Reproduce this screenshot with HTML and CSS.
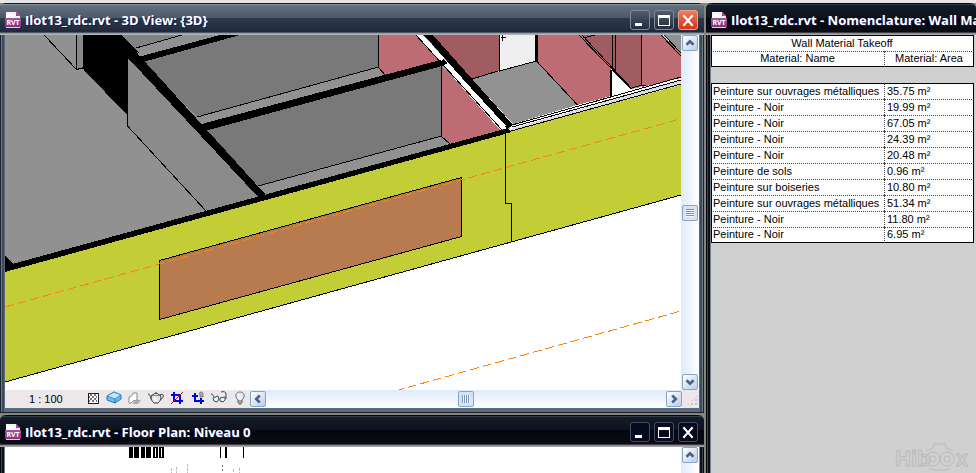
FILE: index.html
```html
<!DOCTYPE html>
<html lang="fr">
<head>
<meta charset="utf-8">
<title>Ilot13_rdc.rvt</title>
<link rel="stylesheet" href="styles.css">
</head>
<body>
<svg class="defs" aria-hidden="true">
  <defs>
    <linearGradient id="plum" x1="0" y1="0" x2="0" y2="1">
      <stop offset="0" stop-color="#a8529c"/><stop offset="1" stop-color="#8a3181"/>
    </linearGradient>
    <symbol id="rvt" viewBox="0 0 16 16">
      <path d="M1 0h10l4 4v12H1z" fill="#f7f1f6"/>
      <path d="M11 0l4 4h-4z" fill="#a33d97"/>
      <path d="M1 4l3-2 3 2 3-1v4H1z" fill="#fff"/>
      <path d="M0 6h16v9H0z" fill="url(#plum)"/>
      <path d="M1 15h14v1H1z" fill="#e5c9e1"/>
      <text x="8" y="13" text-anchor="middle" class="rvt-text">RVT</text>
    </symbol>
    <symbol id="min" viewBox="0 0 18 18"><path d="M4 12h7v3H4z" fill="#fff"/></symbol>
    <symbol id="max" viewBox="0 0 18 18"><path d="M3 4h12v11H3zM4 7v7h10V7z" fill="#fff" fill-rule="evenodd"/></symbol>
    <symbol id="close" viewBox="0 0 18 18"><path d="M5 5l8 9M13 5l-8 9" stroke="#fff" stroke-width="2" stroke-linecap="square"/></symbol>
    <symbol id="up" viewBox="0 0 16 16"><path d="M4 10l4-4 4 4" fill="none" stroke="#4d6185" stroke-width="3"/></symbol>
    <symbol id="down" viewBox="0 0 16 16"><path d="M4 6l4 4 4-4" fill="none" stroke="#4d6185" stroke-width="3"/></symbol>
    <symbol id="left" viewBox="0 0 16 16"><path d="M10 4L6 8l4 4" fill="none" stroke="#4d6185" stroke-width="3"/></symbol>
    <symbol id="right" viewBox="0 0 16 16"><path d="M6 4l4 4-4 4" fill="none" stroke="#4d6185" stroke-width="3"/></symbol>
  </defs>
</svg>

<main class="desktop">
  <div class="stack">
    <section class="window active">
      <header class="titlebar">
        <svg class="doc"><use href="#rvt"/></svg>
        <h1>Ilot13_rdc.rvt - 3D View: {3D}</h1>
        <button type="button" class="wb" aria-label="Minimize"><svg><use href="#min"/></svg></button>
        <button type="button" class="wb" aria-label="Maximize"><svg><use href="#max"/></svg></button>
        <button type="button" class="wb wb-close" aria-label="Close"><svg><use href="#close"/></svg></button>
      </header>
      <div class="client view3d">
        <svg class="scene" viewBox="5 35 676 356" preserveAspectRatio="xMinYMin slice" shape-rendering="crispEdges" role="img" aria-label="3D view">
          <path fill="#fff" d="M5 35h676v356H5z"/>
          <path fill="#919191" d="M5 35H440L512 128 5 268z"/>
          <path fill="#8b8b8b" d="M128 57L260 197 206 211 128 126z"/>
          <path fill="#888" d="M76 35h7v33l-7 1z"/>
          <path fill="#000" d="M84 35h37l18 19-8 6-4-3v58L84 70z"/>
          <path fill="#828282" d="M121 35h61l-46 13z"/>
          <path fill="#919191" d="M182 35h38l-81 22-3-9z"/>
          <path fill="#797979" d="M240 35H378V67L197 117 143 62z"/>
          <path fill="#797979" d="M205 130L442 66V136L258 186z"/>
          <path fill="#bc6c72" d="M378 35h38l25 26-56 15-7-9zM442 66l60 64-52 14-8-8z"/>
          <path fill="#a05c60" d="M433 35h66v36l-27 8z"/>
          <path fill="#efefef" d="M501 35h34v26l-34 10z"/>
          <path fill="#fff" d="M499 35h2v36h-2z"/>
          <path fill="#929292" d="M472 79l65-18 40 44-64 19z"/>
          <path fill="#bc6c72" d="M538 35h41l32 34v27l-34 9-39-43z"/>
          <path fill="#bc6c72" d="M579 35h5l29 33-1 2z"/>
          <path fill="#a05c60" d="M584 35h57v50l-9 4-18-19z"/>
          <path fill="#bc6c72" d="M642 35h21l18 19v24l-39 9z"/>
          <path fill="#919191" d="M664 35h17v19zM632 88l9-3v2l-9 2z"/>
          <path fill="#fff" d="M611 70l19 19-19 6zM416 35h7l85 93-8 2z"/>
          <path fill="#fff" d="M510 127L681 78v5L510 130z"/>
          <path fill="#dcdcdc" d="M510 129L681 80v5L510 132z"/>
          <path fill="#c3ce37" d="M5 271L505 133 681 85V195L5 382z"/>
          <path fill="#b77b4f" stroke="#000" d="M159.500 260.500L461.500 177.500V236.500L159.500 319.500z"/>
          <g fill="#000">
            <path d="M220 35h20L143 62l-5-5zM127 57l10-4 128 141-5 5z"/>
            <path d="M198 125L444 59l4 5-6 2L205 131z"/>
            <path d="M424 35h9l80 90-6 4z"/>
            <path d="M5 266L508 128l3 4-6 2L5 272z"/>
            <path d="M5 256l9 9-9 4zM535 35h3v27h-3z"/>
          </g>
          <path fill="#fff" d="M417 35h6l21 24-3 2zM445 64l3-1 58 63-4 3z"/>
          <g fill="none" stroke="#000">
            <path d="M44.500 35.500l32 34 8-2M76.500 35v34M83.500 35v34M84 69l43 45M127.500 57v69L206 211"/>
            <path d="M121 35l18 18M182 35l-46 13M378.500 35v32L197 117M378 67l8 9M441.500 66v70L258 186M441 136l9 8"/>
            <path d="M416 35l86 95M472 79l26-8M499.500 35v36l37-10 41 44M502.500 35v6M501 37h5"/>
            <path d="M579 35l52 54M582 35l50 54M583 38l12-3M612.500 35v35M615.500 35v37M641.500 35v51M661 35l20 21M664 35l17 18"/>
            <path d="M610.500 70v26" stroke-width="2"/>
            <path d="M632 88l10-3 4 1M512 125L681 77M512 127L681 80M511 131L681 84M5 382L681 195"/>
            <path d="M505.500 133v70h6v38"/>
          </g>
          <g fill="none" stroke="#f88512" stroke-dasharray="9 4">
            <path d="M5 307L680 119M395 391L681 311"/>
          </g>
        </svg>
        <div class="vscroll">
          <button type="button" class="sb" aria-label="Scroll up"><svg><use href="#up"/></svg></button>
          <span class="thumb thumb-v"></span>
          <button type="button" class="sb" aria-label="Scroll down"><svg><use href="#down"/></svg></button>
        </div>
        <div class="viewbar">
          <span class="scale">1 : 100</span>
          <div class="tools">
            <button type="button" aria-label="Detail level"><svg viewBox="0 0 16 16" shape-rendering="crispEdges"><path d="M3 3h10v10H3z" fill="#fff" stroke="#222"/><path d="M5 4h2v2H5zM9 4h2v2H9zM7 6h2v2H7zM11 6h1v2h-1zM4 6h1v2H4zM5 8h2v2H5zM9 8h2v2H9zM7 10h2v2H7zM4 10h1v2H4zM11 10h1v2h-1z" fill="#777"/></svg></button>
            <button type="button" aria-label="Model graphics"><svg viewBox="0 0 16 16"><path d="M1 6l7-4 7 3v4l-6 4-8-3z" fill="#78b8ee" stroke="#2277bb"/><path d="M1 6l7-4 7 3-6 4z" fill="#c3e4fb" stroke="#3a8cca"/><path d="M9 9v4" stroke="#2277bb"/></svg></button>
            <button type="button" aria-label="Shadows"><svg viewBox="0 0 16 16"><path d="M5 14l4-4h5l-3 4z" fill="#aaa"/><path d="M2 13V7c2 0 3-1 4-4h4v7l-4 1-2 2z" fill="#fff" stroke="#888"/></svg></button>
            <button type="button" aria-label="Rendering"><svg viewBox="0 0 16 16"><path d="M4 10C2 9 3 4 0 4M12 5c4-2 5 2 0 5" fill="none" stroke="#333"/><path d="M4 5h8c2 4 0 6-2 8H6C4 11 2 9 4 5z" fill="#e4e4e4" stroke="#333"/><path d="M5 5c1-2 5-2 6 0M7 3h2" fill="#fff" stroke="#333"/><path d="M7 7c-1 2 0 3 1 4" fill="none" stroke="#fff" stroke-width="2"/></svg></button>
            <button type="button" aria-label="Crop region"><svg viewBox="0 0 16 16"><path d="M5 2v9h9M2 5h9v9" fill="none" stroke="#0000f0" stroke-width="2"/><path d="M2 14L14 2" stroke="#a01522"/></svg></button>
            <button type="button" aria-label="Show crop region"><svg viewBox="0 0 16 16"><path d="M5 3v8h9M2 6h6M11 8v6" fill="none" stroke="#0000f0" stroke-width="2"/><path d="M10 7V5C8 1 14 1 13 5v2z" fill="#aaa" stroke="#777"/></svg></button>
            <button type="button" aria-label="Hide or isolate"><svg viewBox="0 0 16 16"><path d="M0 4c2 0 2 2 3 3M10 2c3-1 5 0 5 2v5" fill="none" stroke="#345"/><path d="M2 8l5-2 1 3-2 3-3-1zM9 8l5-1v3l-2 2-3-1z" fill="#e9f5f4" stroke="#355"/></svg></button>
            <button type="button" aria-label="Reveal hidden elements"><svg viewBox="0 0 16 16"><path d="M6 10C2 6 4 2 8 2s6 4 2 8v3H6z" fill="#e8f0f5" stroke="#667"/><path d="M6 11h4M7 14h2" stroke="#556"/><path d="M6 6c0-1 1-2 2-2" fill="none" stroke="#fff"/></svg></button>
          </div>
          <div class="hscroll">
            <button type="button" class="sb" aria-label="Scroll left"><svg><use href="#left"/></svg></button>
            <span class="thumb thumb-h"></span>
            <button type="button" class="sb" aria-label="Scroll right"><svg><use href="#right"/></svg></button>
          </div>
          <span class="grip"></span>
        </div>
      </div>
    </section>

    <section class="window plan">
      <header class="titlebar">
        <svg class="doc"><use href="#rvt"/></svg>
        <h2>Ilot13_rdc.rvt - Floor Plan: Niveau 0</h2>
        <button type="button" class="wb" aria-label="Minimize"><svg><use href="#min"/></svg></button>
        <button type="button" class="wb" aria-label="Maximize"><svg><use href="#max"/></svg></button>
        <button type="button" class="wb" aria-label="Close"><svg><use href="#close"/></svg></button>
      </header>
      <div class="client planview">
        <svg class="scene" viewBox="5 447 676 26" preserveAspectRatio="xMinYMin slice" shape-rendering="crispEdges" role="img" aria-label="Floor plan">
          <path fill="#000" d="M129 447h4v11h-4zM134 447h5v11h-5zM141 447h4v11h-4zM146 447h5v11h-5zM153 447h5v11h-5zM159 447h5v11h-5zM220 447h1v11h-1zM225 447h2v11h-2zM243 447h1v11h-1z"/>
          <path fill="#fff" d="M155 448h1v9h-1zM161 448h1v9h-1z"/>
          <path stroke="#bbb" stroke-dasharray="3 1" d="M171.500 468v5M176.500 467v6M187.500 464v9M233.500 469v4M239.500 468v5"/>
          <path stroke="#666" stroke-dasharray="2 2" d="M222.500 465v8"/>
        </svg>
        <div class="vscroll">
          <button type="button" class="sb" aria-label="Scroll up"><svg><use href="#up"/></svg></button>
        </div>
      </div>
    </section>
  </div>

  <section class="window schedule">
    <header class="titlebar">
      <svg class="doc"><use href="#rvt"/></svg>
      <h2>Ilot13_rdc.rvt - Nomenclature: Wall Mat</h2>
    </header>
    <div class="client sheet">
      <table>
        <colgroup><col class="c-name"><col class="c-area"></colgroup>
        <thead>
          <tr><th colspan="2" scope="colgroup">Wall Material Takeoff</th></tr>
          <tr><th scope="col">Material: Name</th><th scope="col">Material: Area</th></tr>
        </thead>
        <tbody class="spacer"><tr><td colspan="2"></td></tr></tbody>
        <tbody class="rows">
          <tr><td>Peinture sur ouvrages métalliques</td><td>35.75 m²</td></tr>
          <tr><td>Peinture - Noir</td><td>19.99 m²</td></tr>
          <tr><td>Peinture - Noir</td><td>67.05 m²</td></tr>
          <tr><td>Peinture - Noir</td><td>24.39 m²</td></tr>
          <tr><td>Peinture - Noir</td><td>20.48 m²</td></tr>
          <tr><td>Peinture de sols</td><td>0.96 m²</td></tr>
          <tr><td>Peinture sur boiseries</td><td>10.80 m²</td></tr>
          <tr><td>Peinture sur ouvrages métalliques</td><td>51.34 m²</td></tr>
          <tr><td>Peinture - Noir</td><td>11.80 m²</td></tr>
          <tr><td>Peinture - Noir</td><td>6.95 m²</td></tr>
        </tbody>
      </table>
      <svg class="mark" viewBox="0 0 84 33" role="img" aria-label="Hiboox">
        <path d="M34 11q2-2 6-2l2-5h11l2 5q4 0 6 2M37 28q2 2 5 2h12q3 0 5-2"/>
        <circle cx="41" cy="19" r="7"/><circle cx="41" cy="19" r="3"/>
        <circle cx="55" cy="19" r="7"/><circle cx="55" cy="19" r="3"/>
        <text x="3" y="26">Hib</text><text x="64" y="26">x</text>
      </svg>
    </div>
  </section>
</main>
</body>
</html>
```
FILE: styles.css
```css
* { box-sizing: border-box; }

body {
  margin: 0;
  height: 100vh;
  overflow: hidden;
  background: #85857f;
  font-family: "Liberation Sans", Arial, sans-serif;
  font-size: 11px;
  color: #000;
}

.defs { position: absolute; width: 0; height: 0; }

button {
  padding: 0;
  border: 0;
  background: none;
  flex: none;
}

button svg { display: block; width: 100%; height: 100%; }

.desktop {
  display: grid;
  grid-template-columns: minmax(0, 704fr) minmax(0, 270fr);
  gap: 2px;
  height: 100%;
  border-top: 3px solid #e6e6e6;
}

.stack {
  display: grid;
  grid-template-rows: minmax(0, 410fr) minmax(0, 58fr);
  gap: 2px;
  min-height: 0;
}

.window {
  display: flex;
  flex-direction: column;
  min-width: 0;
  min-height: 0;
  padding: 0 5px;
  background: linear-gradient(90deg, #05080f 0 1px, #3b4350 1px 2px, #0b101c 2px 4px, #777b82 4px calc(100% - 5px), #8a8d93 calc(100% - 5px) calc(100% - 4px), #0b101c calc(100% - 4px) calc(100% - 2px), #3b4350 calc(100% - 2px) calc(100% - 1px), #05080f calc(100% - 1px));
  border-radius: 6px 6px 0 0;
  overflow: hidden;
}

.active {
  padding-bottom: 4px;
  border-bottom: 1px solid #1b222d;
  background: linear-gradient(90deg, #1b222d 0 1px, #6d7b88 1px 2px, #3c4a5c 2px 4px, #5c6a79 4px calc(100% - 4px), #3c4a5c calc(100% - 4px) calc(100% - 2px), #6d7b88 calc(100% - 2px) calc(100% - 1px), #1b222d calc(100% - 1px));
}

.plan, .schedule { padding-bottom: 0; }
.schedule { padding-right: 0; }

.titlebar {
  display: flex;
  align-items: center;
  gap: 4px;
  flex: none;
  height: 32px;
  margin: 0 -5px;
  padding: 2px 6px 0 5px;
  background: linear-gradient(#05070d 0 1px, #333b48 1px 2px, #141c29 2px, #0c121d 15px, #04070d 15px, #080c13 29px, #6f7177 30px, #a9a4aa 31px);
}

.active .titlebar {
  background: linear-gradient(#10151d 0 1px, #8d959d 1px 2px, #65717e 2px, #4a5868 15px, #2d3a4a 15px, #20293b 29px, #7f858d 30px, #b0b3b8 31px);
}

.schedule .titlebar { margin-right: 0; padding-right: 0; }

.titlebar h1, .titlebar h2 {
  flex: 1;
  min-width: 0;
  margin: 0;
  overflow: hidden;
  font: 700 13px/18px "Open Sans", "Noto Sans", sans-serif;
  color: #fff;
  white-space: nowrap;
  text-shadow: 1px 1px 0 #101c66;
}

.doc { flex: none; width: 16px; height: 16px; }

.rvt-text {
  font: 700 7px "Open Sans", sans-serif;
  fill: #fff;
}

.wb {
  width: 20px;
  height: 20px;
  border: 1px solid #40506a;
  border-radius: 3px;
  background: #060a1c;
}

.active .wb { border-color: #7f8b99; background: linear-gradient(#4f5c6c, #222e40); }
.active .wb-close { border-color: #e8a595; background: linear-gradient(#f27a5c, #dc3014); }

.client { flex: 1; min-height: 0; }

.view3d {
  display: grid;
  grid-template-columns: minmax(0, 1fr) 18px;
  grid-template-rows: minmax(0, 1fr) 18px;
  background: #fff;
}

.planview {
  display: grid;
  grid-template-columns: minmax(0, 1fr) 18px;
  background: #fff;
}

.scene { display: block; width: 100%; height: 100%; min-height: 0; }

.vscroll {
  display: flex;
  flex-direction: column;
  align-items: center;
  justify-content: space-between;
  min-height: 0;
  background: linear-gradient(90deg, #dfeafb, #fff);
}

.sb {
  width: 16px;
  height: 16px;
  border: 1px solid #8aa5c4;
  border-radius: 2px;
  background: linear-gradient(135deg, #fff, #b9cee9);
}

.thumb {
  flex: none;
  width: 16px;
  height: 16px;
  border: 1px solid #8aa5c4;
  border-radius: 2px;
  background-color: #d5e3f4;
  background-position: center;
  background-repeat: no-repeat;
  background-size: 8px 8px;
}

.thumb-v { background-image: repeating-linear-gradient(#7f95b5 0 1px, #f4f8fd 1px 2px); }
.thumb-h { background-image: repeating-linear-gradient(90deg, #7f95b5 0 1px, #f4f8fd 1px 2px); }

.viewbar {
  grid-column: 1 / -1;
  display: flex;
  align-items: flex-start;
  background: #ebe7ea;
}

.scale { width: 80px; padding-left: 24px; line-height: 18px; }

.tools { display: flex; gap: 5px; width: 165px; }
.tools button { width: 16px; height: 16px; }

.hscroll {
  display: flex;
  align-items: center;
  justify-content: space-between;
  flex: 1;
  height: 18px;
  background: linear-gradient(#dfeafb, #fff);
}

.grip {
  width: 17px;
  height: 17px;
  background: radial-gradient(circle at 2px 2px, #cbc6c9 1px, transparent 1px) 4px 4px / 4px 4px;
  clip-path: polygon(100% 20%, 100% 100%, 20% 100%);
}

.sheet {
  position: relative;
  background: #d0d0d0;
}

table {
  width: calc(100% - 2px);
  table-layout: fixed;
  border-collapse: separate;
  border-spacing: 0;
}

.c-name { width: 173px; }

th, td {
  height: 16px;
  padding: 0 2px 2px;
  font-weight: 400;
  line-height: 12px;
  text-align: left;
  white-space: nowrap;
}

thead th { text-align: center; }

thead th, .rows td {
  background: #fff;
  border-top: 1px dotted #444;
  border-left: 1px dotted #444;
}

thead th:first-child, .rows td:first-child { border-left: 1px solid #000; padding-left: 1px; }
thead th:last-child, .rows td:last-child { border-right: 1px solid #000; }
thead tr:first-child th, .rows tr:first-child td { border-top: 1px solid #000; }
thead tr:last-child th, .rows tr:last-child td { border-bottom: 1px solid #000; }

.mark {
  position: absolute;
  right: 0;
  bottom: 0;
  width: 84px;
  height: 33px;
  fill: none;
  stroke: #bababa;
  stroke-width: 1;
}

.mark text { font: 700 22px "Liberation Sans", sans-serif; }
```
